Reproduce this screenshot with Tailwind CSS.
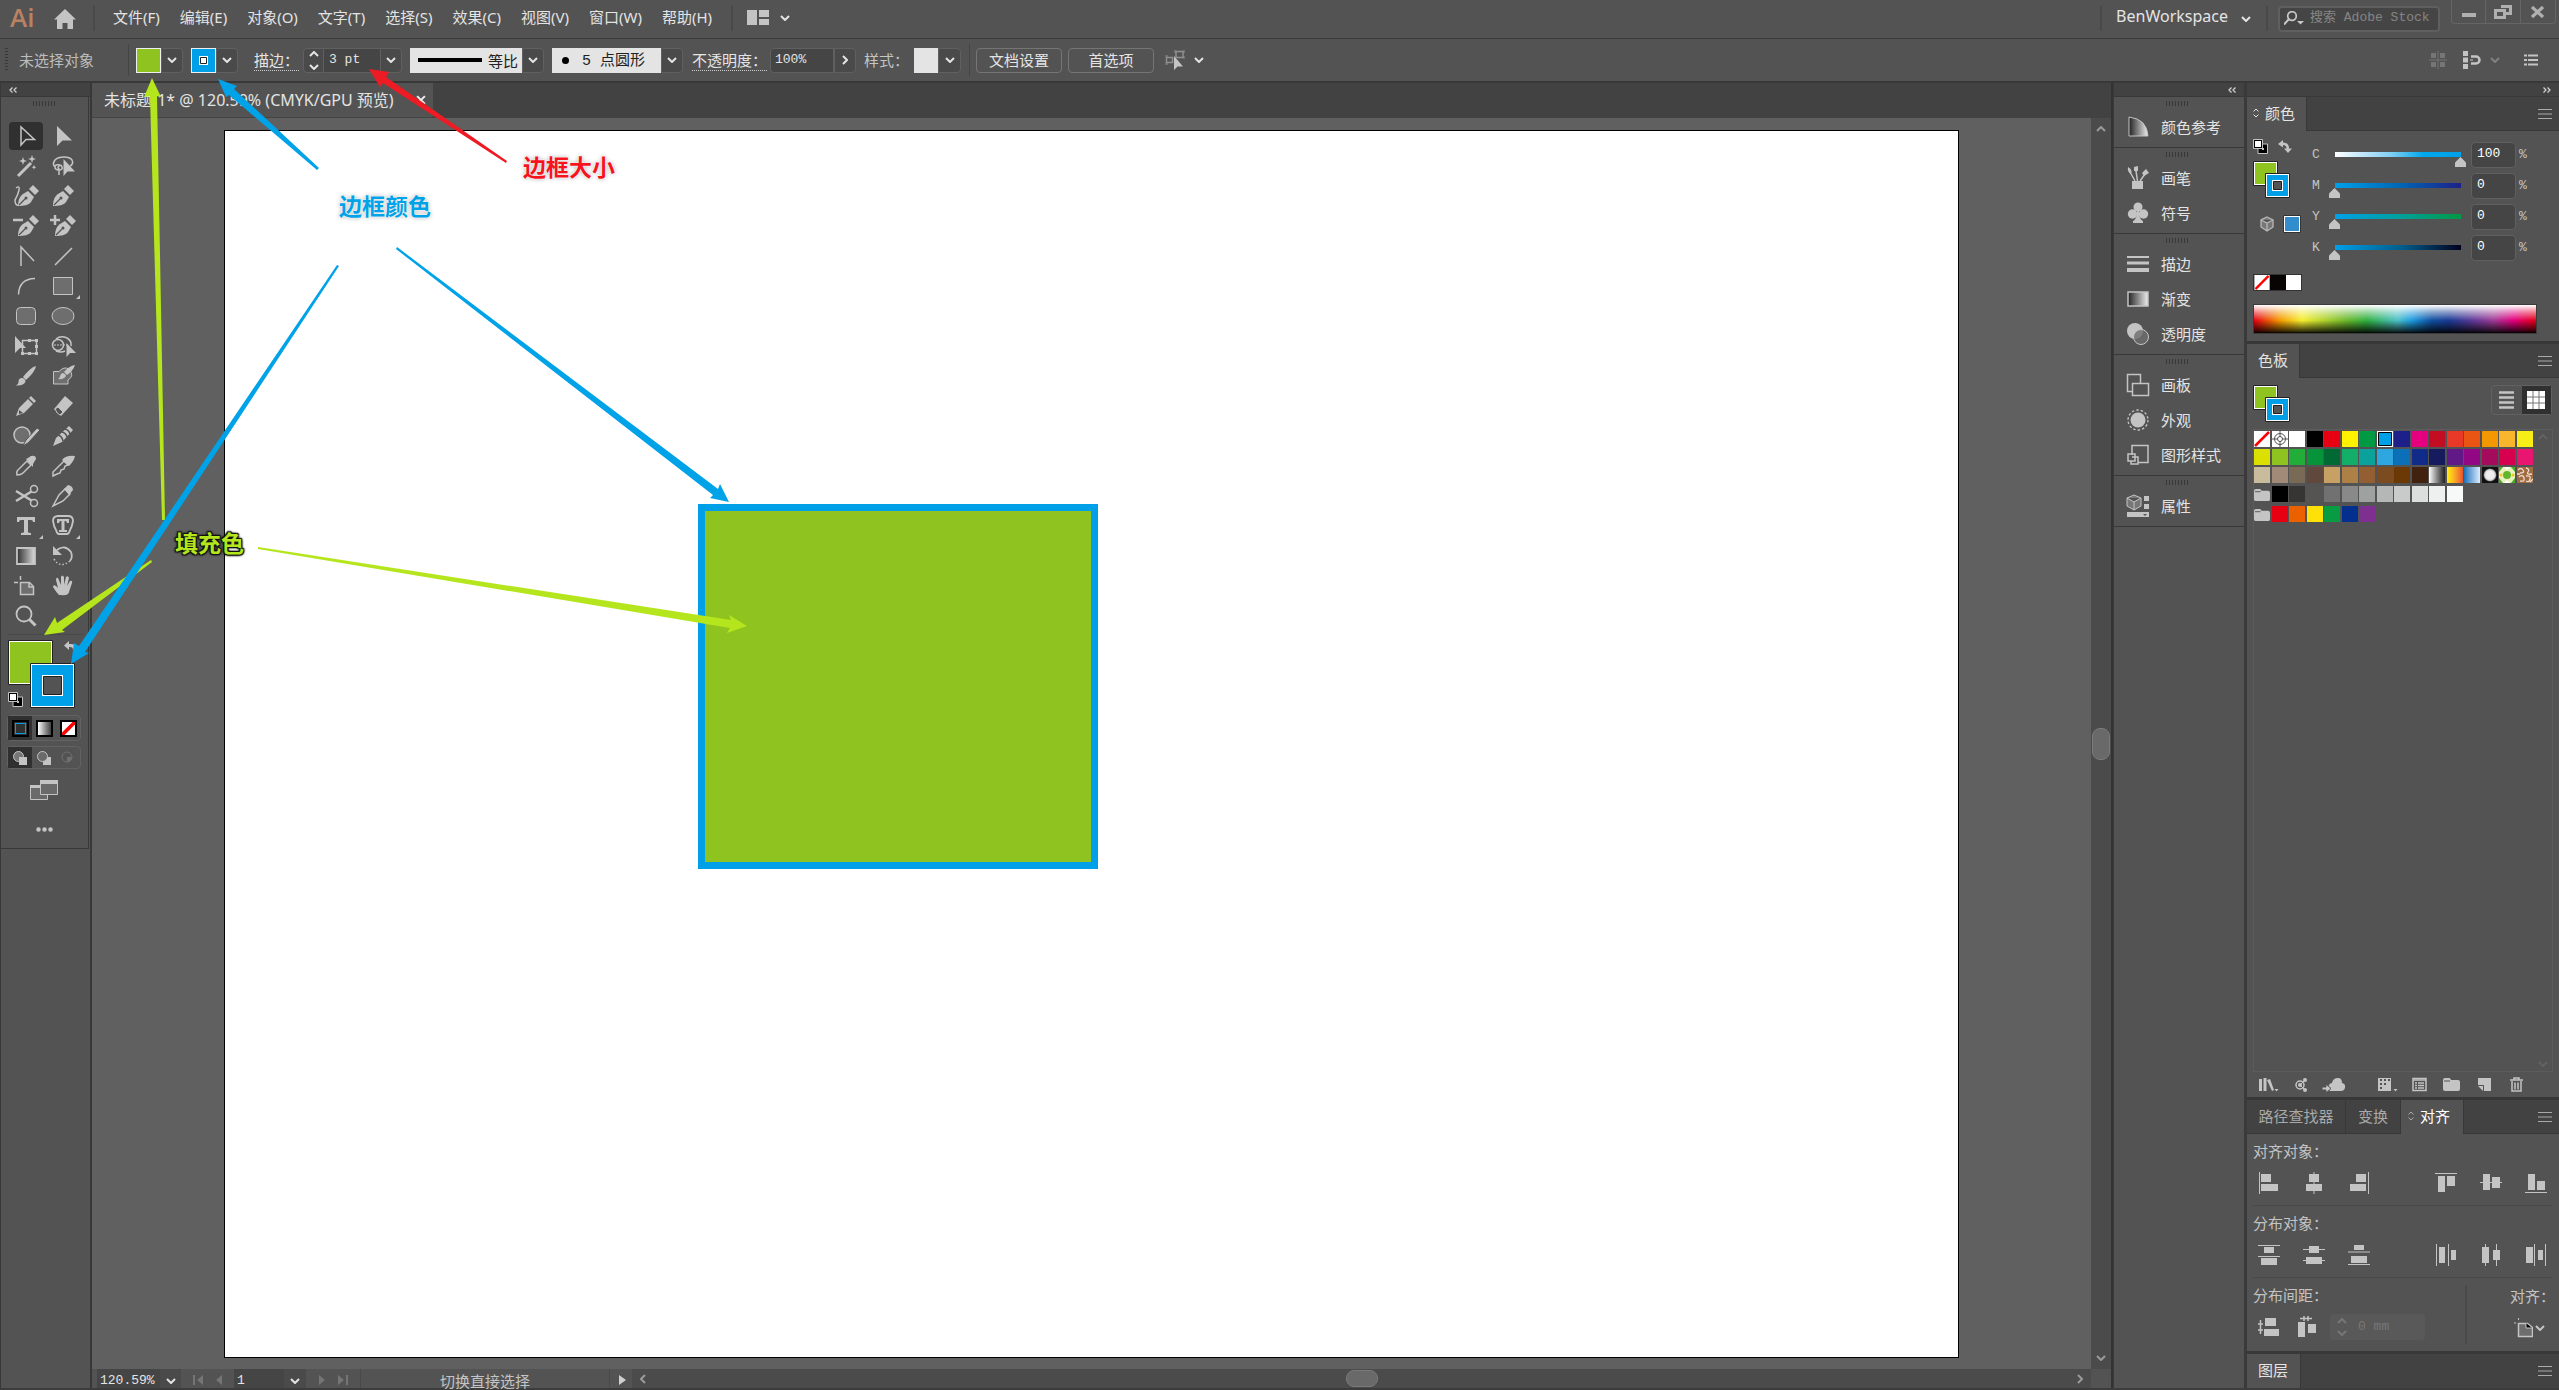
<!DOCTYPE html>
<html lang="zh-CN">
<head>
    <meta charset="UTF-8">
    <meta name="viewport" content="width=device-width, initial-scale=1.0">
    <title>未标题-1 - Ai</title>
    <script src="https://cdn.jsdelivr.net/npm/@tailwindcss/browser@4"></script>
</head>
<body class="relative h-screen overflow-hidden flex flex-col bg-[#535353] text-[#e4e4e4] text-[15px] leading-5 font-['Noto_Sans','Noto_Sans_CJK_SC',sans-serif]">
    <!-- shared glyphs -->
    <svg class="hidden">
        <symbol id="down" viewBox="0 0 10 6"><path d="M1 1l4 4 4-4" fill="none" stroke="currentColor" stroke-width="2"/></symbol>
        <symbol id="right" viewBox="0 0 6 10"><path d="M1 1l4 4-4 4" fill="none" stroke="currentColor" stroke-width="2"/></symbol>
        <symbol id="menu" viewBox="0 0 14 12"><path d="M0 1.500h14M0 6h14M0 10.500h14" stroke="currentColor"/></symbol>
        <symbol id="sort" viewBox="0 0 6 10"><path d="M.5 3.500L3 1l2.500 2.500M.5 6.500L3 9l2.500-2.500" fill="none" stroke="currentColor"/></symbol>
        <symbol id="dleft" viewBox="0 0 8 6"><path d="M3.500.5L1 3l2.500 2.500M7.500.5L5 3l2.500 2.500" fill="none" stroke="currentColor" stroke-width="1.300"/></symbol>
        <symbol id="dright" viewBox="0 0 8 6"><path d="M.5.5L3 3 .5 5.500M4.500.5L7 3 4.500 5.500" fill="none" stroke="currentColor" stroke-width="1.300"/></symbol>
        <symbol id="grip" viewBox="0 0 24 5"><path d="M.5 0v5M3.500 0v5M6.500 0v5M9.500 0v5M12.500 0v5M15.500 0v5M18.500 0v5M21.500 0v5" stroke="#383838"/></symbol>
        <symbol id="default" viewBox="0 0 15 15"><path d="M5 5h9.500v9.500H5z" fill="#000" stroke="#c4c4c4"/><path d="M9 9h2v2H9z" fill="#c4c4c4"/><path d="M.5.5h9v9h-9z" fill="#000" stroke="#c4c4c4"/><path d="M2 2h6v6H2z" fill="#fff"/></symbol>
        <symbol id="paint" viewBox="0 0 37 37">
            <path d="M.5.5h24v24H.5z" fill="#fff" stroke="#222"/><path d="M2 2h21v21H2z" fill="#8fc31f"/>
            <path d="M12.500 12.500h24v24h-24z" fill="#fff" stroke="#222"/><path d="M14 14h21v21H14z" fill="#00a0e9"/>
            <path d="M19 19h11v11H19z" fill="#fff"/><path d="M20.500 20.500h8v8h-8z" fill="#535353" stroke="#222"/>
        </symbol>
        <symbol id="none" viewBox="0 0 16 16"><path d="M0 0h16v16H0z" fill="#fff"/><path d="M1 15L15 1" stroke="#f00" stroke-width="2.500"/></symbol>
        <symbol id="folder" viewBox="0 0 17 13"><path d="M0 2q0-2 2-2h4q1.500 0 2 2h7q2 0 2 2v7q0 2-2 2H2q-2 0-2-2z" fill="#c4c4c4"/><path d="M1 3h6" stroke="#535353"/></symbol>
    </svg>

    <header class="h-[39px] shrink-0 flex items-center border-b border-[#3c3c3c] pb-[1px]">
        <span class="ml-[10px] w-[26px] pb-1 text-[26px] leading-8 font-semibold font-['Open_Sans',sans-serif] text-[#b98262]">Ai</span>
        <button aria-label="主页" class="ml-[17px] text-[#c4c4c4]"><svg class="w-6 h-5" viewBox="0 0 24 20"><path d="M12 0L1 10.500h3V20h5.500v-6h5v6H20v-9.500h3z" fill="currentColor"/></svg></button>
        <i class="ml-4 w-[2px] h-[25px] bg-[#494949]"></i>
        <nav class="ml-[18px] pb-[3px] flex gap-5">
            <a href="#">文件(F)</a>
            <a href="#">编辑(E)</a>
            <a href="#">对象(O)</a>
            <a href="#">文字(T)</a>
            <a href="#">选择(S)</a>
            <a href="#">效果(C)</a>
            <a href="#">视图(V)</a>
            <a href="#">窗口(W)</a>
            <a href="#">帮助(H)</a>
        </nav>
        <i class="ml-[19px] w-[2px] h-[25px] bg-[#494949]"></i>
        <button aria-label="排列文档" class="ml-[14px] pb-[2px] flex items-center gap-[11px]">
            <svg class="w-[22px] h-[15px]" viewBox="0 0 22 15"><path d="M0 0h10v15H0zM12 0h10v7H12zM12 9h10v6H12z" fill="#c4c4c4"/></svg>
            <svg class="w-[10px] h-[6px]"><use href="#down"/></svg>
        </button>
        <i class="ml-auto w-[2px] h-[25px] bg-[#494949]"></i>
        <button class="ml-[14px] flex items-center gap-[13px] pb-[6px] text-base leading-5">BenWorkspace <svg class="w-[10px] h-[6px] mt-[6px]"><use href="#down"/></svg></button>
        <i class="ml-[15px] w-[2px] h-[25px] bg-[#494949]"></i>
        <label class="ml-[10px] w-[162px] h-[26px] flex items-center border-2 border-[#5f5f5f] rounded bg-[#454545] pl-1">
            <svg class="w-5 h-[15px]" viewBox="0 0 20 15"><circle cx="8" cy="5" r="4.300" fill="none" stroke="#c8c8c8" stroke-width="1.700"/><path d="M5 8l-5 5.500" stroke="#c8c8c8" stroke-width="2"/><path d="M13 10h7l-3.500 3.500z" fill="#c8c8c8"/></svg>
            <input aria-label="搜索" placeholder="搜索 Adobe Stock" class="w-[124px] ml-[6px] pb-[2px] text-[13px] font-['Liberation_Mono','Noto_Sans_CJK_SC',monospace] placeholder-[#858585] outline-none">
        </label>
        <div class="ml-[11px] mr-[3px] self-start h-6 w-[105px] grid grid-cols-3 divide-x divide-[#656565] border border-t-0 border-[#656565] rounded-b">
            <button aria-label="最小化" class="flex items-center justify-center"><svg class="w-[14px] h-1 mt-[6px]"><path d="M0 0h14v4H0z" fill="#b0b0b0"/></svg></button>
            <button aria-label="还原" class="flex items-center justify-center"><svg class="w-[18px] h-[14px]" viewBox="0 0 18 14"><path d="M7 1.500h9.500v7H12M1.500 5.500h9v7h-9z" fill="none" stroke="#b0b0b0" stroke-width="3"/></svg></button>
            <button aria-label="关闭" class="flex items-center justify-center"><svg class="w-[13px] h-[12px]" viewBox="0 0 13 12"><path d="M1 1l11 10M12 1L1 11" stroke="#b0b0b0" stroke-width="3.200"/></svg></button>
        </div>
    </header>

    <div class="h-[44px] shrink-0 flex items-center border-b-2 border-[#383838] pl-[5px]">
        <svg class="w-1 h-6"><path d="M1.500 0v24" stroke="#383838" stroke-width="3" stroke-dasharray="1 2"/></svg>
        <span class="ml-[10px] w-[75px] text-[#bdbdbd]">未选择对象</span>
        <i class="ml-[34px] w-[1px] h-8 bg-[#454545]"></i>
        <button aria-label="填色" class="ml-[7px] flex"><span class="w-[25px] h-[25px] bg-[#8fc31f] border border-[#eee]"></span><span class="w-[22px] h-[25px] flex items-center justify-center bg-[#4a4a4a] border border-[#606060] rounded-r"><svg class="w-[10px] h-[6px]"><use href="#down"/></svg></span></button>
        <button aria-label="描边颜色" class="ml-2 flex"><span class="w-[25px] h-[25px] flex items-center justify-center bg-[#00a0e9] border border-[#eee]"><svg class="size-[9px]" viewBox="0 0 9 9"><path d="M0 0h9v9H0z" fill="#fff"/><path d="M1.500 1.500h6v6h-6z" fill="#fff" stroke="#222"/></svg></span><span class="w-[22px] h-[25px] flex items-center justify-center bg-[#4a4a4a] border border-[#606060] rounded-r"><svg class="w-[10px] h-[6px]"><use href="#down"/></svg></span></button>
        <label for="weight" class="ml-4 w-[45px] whitespace-nowrap border-b border-dotted border-[#ccc]">描边：</label>
        <button aria-label="增减" class="ml-1 w-[21px] h-[25px] flex flex-col items-center justify-center gap-[7px] bg-[#4a4a4a] border border-[#606060] rounded-l"><svg class="w-[10px] h-[6px] rotate-180"><use href="#down"/></svg><svg class="w-[10px] h-[6px]"><use href="#down"/></svg></button>
        <input id="weight" value="3 pt" class="w-[56px] h-[25px] pl-[5px] pb-[2px] bg-[#454545] border-y border-[#606060] text-[13px] font-['Liberation_Mono',monospace]">
        <button aria-label="粗细" class="w-[22px] h-[25px] flex items-center justify-center bg-[#4a4a4a] border border-[#606060] rounded-r"><svg class="w-[10px] h-[6px]"><use href="#down"/></svg></button>
        <div class="ml-2 w-[112px] h-[25px] flex items-center bg-[#e4e4e4] pl-2 text-[#222]"><i class="w-16 h-1 bg-black"></i><select aria-label="宽度配置文件" class="appearance-none ml-[6px] mt-[2px] w-[34px] outline-none"><option>等比</option></select></div>
        <span class="w-[22px] h-[25px] flex items-center justify-center bg-[#4a4a4a] border border-[#606060] rounded-r"><svg class="w-[10px] h-[6px]"><use href="#down"/></svg></span>
        <div class="ml-2 w-[109px] h-[25px] flex items-center bg-[#e4e4e4] pl-[10px] text-[#222]"><i class="size-[7px] rounded-full bg-black"></i><select aria-label="画笔定义" class="appearance-none ml-[13px] mt-1 w-[78px] outline-none text-[15px] leading-5 font-['Liberation_Mono','Noto_Sans_CJK_SC',monospace]"><option>5 点圆形</option></select></div>
        <span class="w-[22px] h-[25px] flex items-center justify-center bg-[#4a4a4a] border border-[#606060] rounded-r"><svg class="w-[10px] h-[6px]"><use href="#down"/></svg></span>
        <label for="opacity" class="ml-[9px] w-[75px] whitespace-nowrap border-b border-dotted border-[#ccc]">不透明度：</label>
        <input id="opacity" value="100%" class="ml-[3px] w-16 h-[25px] pl-1 pb-[2px] bg-[#454545] border border-[#606060] rounded-l text-[13px] font-['Liberation_Mono',monospace]">
        <button aria-label="更多" class="w-[22px] h-[25px] flex items-center justify-center bg-[#4a4a4a] border border-[#606060] rounded-r"><svg class="w-[6px] h-[10px]"><use href="#right"/></svg></button>
        <span class="ml-2 w-[45px] text-[#c4c4c4]">样式：</span>
        <button aria-label="图形样式" class="ml-[5px] flex"><span class="w-6 h-[25px] bg-[#e4e4e4]"></span><span class="w-[23px] h-[25px] flex items-center justify-center bg-[#4a4a4a] border border-[#606060] rounded-r"><svg class="w-[10px] h-[6px]"><use href="#down"/></svg></span></button>
        <i class="ml-2 w-[1px] h-8 bg-[#454545]"></i>
        <button class="ml-[6px] w-[86px] h-[25px] flex items-center justify-center border border-[#757575] rounded">文档设置</button>
        <button class="ml-[6px] w-[86px] h-[25px] flex items-center justify-center border border-[#757575] rounded">首选项</button>
        <button aria-label="选择类似的对象" class="ml-[11px] flex items-center gap-[9px]">
            <svg class="w-5 h-5" viewBox="0 0 20 20"><path d="M11 1.500h7v6h-7zM1.500 7.500h6v5h-6z" fill="none" stroke="#909090" stroke-width="1.500"/><path d="M10 0v3M19 0v3M19 6v3M0 6h3M0 14h3" stroke="#909090"/><path d="M9 6v14l3.500-3.500H18z" fill="#c4c4c4"/></svg>
            <svg class="w-[10px] h-[6px]"><use href="#down"/></svg>
        </button>
        <div class="ml-auto mr-[21px] flex items-center text-[#c4c4c4]">
            <svg class="w-[18px] h-[18px] text-[#757575]" viewBox="0 0 18 18"><path d="M2 2h5v5H2zM11 2h5v5h-5zM2 11h5v5H2zM11 11h5v5h-5z" fill="currentColor"/><path d="M9 0v18M0 9h18" stroke="currentColor"/></svg>
            <svg class="ml-4 w-[18px] h-[18px]" viewBox="0 0 18 18"><path d="M0 0h5v5H0zM0 6.500h5v5H0zM0 13h5v5H0z" fill="currentColor"/><path d="M8 5.500h5a3.500 3.500 0 0 1 0 7H8" fill="none" stroke="currentColor" stroke-width="2.500"/><path d="M7 9h3" stroke="currentColor"/></svg>
            <svg class="ml-[9px] w-[10px] h-[6px] text-[#808080]"><use href="#down"/></svg>
            <svg class="ml-6 w-[14px] h-3" viewBox="0 0 14 12"><path d="M0 1.500h3M0 6h3M0 10.500h3M4 1.500h10M4 6h10M4 10.500h10" stroke="currentColor" stroke-width="2"/></svg>
        </div>
    </div>

    <main class="flex-1 min-h-0 flex border-b-2 border-[#3c3c3c]">
        <!-- tools -->
        <aside class="w-[92px] shrink-0 border-l border-r-2 border-[#383838]">
            <div class="h-[14px] bg-[#424242] border-b border-[#383838] px-2 flex items-center text-[#d0d0d0]"><svg class="w-2 h-[6px]"><use href="#dleft"/></svg></div>
            <div class="h-[752px] mr-[1px] border-r border-b border-[#383838] pl-[6px] pt-1">
                <svg class="ml-[26px] w-6 h-[5px]"><use href="#grip"/></svg>
                <div id="tools" class="mt-[15px] grid grid-cols-[37px_37px] auto-rows-[30px] text-[#c4c4c4]"></div>
                <i class="block mt-[3px] w-[76px] h-[1px] bg-[#484848]"></i>
                <svg class="ml-[1px] mt-[5px] w-[76px] h-[70px]" viewBox="0 0 76 70">
                    <path d="M.5.5h44v44H.5z" fill="#fff" stroke="#222"/><path d="M2 2h41v41H2z" fill="#8fc31f"/>
                    <path d="M22.500 23.500h44v44h-44z" fill="#fff" stroke="#222"/><path d="M24 25h41v41H24z" fill="#00a0e9"/>
                    <path d="M34 35h21v21H34z" fill="#fff"/><path d="M35.500 36.500h18v18h-18z" fill="#535353" stroke="#222"/>
                    <path d="M61 1v3h2q5 0 5 5v4h-3V10q0-3-3-3h-1v3l-5-4.500z" fill="#c4c4c4"/>
                    <use href="#default" x="0" y="52" width="15" height="15"/>
                </svg>
                <div class="mt-[5px] w-[74px] h-[26px] grid grid-cols-3 border border-[#626262] rounded">
                    <button aria-label="颜色" class="bg-[#303030] flex items-center justify-center"><span class="size-[17px] border-2 border-black p-[1px]"><i class="block h-full border border-[#00a0e9]"></i></span></button>
                    <button aria-label="渐变" class="flex items-center justify-center"><span class="size-[17px] border-2 border-black bg-linear-to-r from-white to-[#444]"></span></button>
                    <button aria-label="无" class="flex items-center justify-center"><svg class="size-[17px] border-2 border-black" viewBox="0 0 16 16"><path d="M0 0h16v16H0z" fill="#fff"/><path d="M0 16L16 0" stroke="#f00" stroke-width="4.500"/></svg></button>
                </div>
                <div class="mt-[5px] w-[74px] h-[23px] grid grid-cols-3 border border-[#626262] rounded">
                    <button aria-label="正常绘图" class="bg-[#303030] flex items-center justify-center"><svg class="size-[14px]" viewBox="0 0 14 14"><circle cx="5.500" cy="5.500" r="5" fill="#777" stroke="#c4c4c4"/><path d="M6 6h8v8H6z" fill="#c4c4c4"/></svg></button>
                    <button aria-label="背面绘图" class="flex items-center justify-center"><svg class="size-[14px]" viewBox="0 0 14 14"><path d="M6 6h8v8H6z" fill="#c4c4c4"/><circle cx="5.500" cy="5.500" r="5" fill="#6a6a6a" stroke="#c4c4c4"/></svg></button>
                    <button aria-label="内部绘图" class="flex items-center justify-center"><svg class="size-[14px]" viewBox="0 0 14 14"><circle cx="6" cy="6" r="5" fill="none" stroke="#707070"/><path d="M6 6h5q0 5-5 5z" fill="#707070"/></svg></button>
                </div>
                <button aria-label="屏幕模式" class="block ml-[23px] mt-[11px]"><svg class="w-7 h-5" viewBox="0 0 28 20"><path d="M.5 5.500h17v14H.5z" fill="#6a6a6a" stroke="#c4c4c4"/><path d="M0 5h10v3H0z" fill="#c4c4c4"/><path d="M10.500.5h17v14h-17z" fill="#6a6a6a" stroke="#c4c4c4"/><path d="M10 0h18v4H10z" fill="#c4c4c4"/></svg></button>
                <button aria-label="编辑工具栏" class="block ml-[29px] mt-[27px]"><svg class="w-[17px] h-[5px]"><path d="M2.500 2.500h.01M8.500 2.500h.01M14.500 2.500h.01" stroke="#c4c4c4" stroke-width="4.500" stroke-linecap="round"/></svg></button>
            </div>
        </aside>

        <!-- document window -->
        <section class="flex-1 min-w-0 flex flex-col border-r-2 border-[#333]">
            <div class="h-[35px] shrink-0 flex bg-[#424242]">
                <div class="w-[341px] h-[35px] flex items-center bg-[#535353] border-b border-[#444] pl-3 pr-[7px]">
                    <span class="text-base whitespace-nowrap">未标题-1* @ 120.59% (CMYK/GPU 预览)</span>
                    <button aria-label="关闭文档" class="ml-auto"><svg class="w-[10px] h-[10px]" viewBox="0 0 9 9"><path d="M1 1l7 7M8 1L1 8" stroke="#eee" stroke-width="1.800"/></svg></button>
                </div>
            </div>
            <div class="flex-1 min-h-0 flex">
                <div class="flex-1 bg-[#606060] px-[132px] pt-3 pb-[11px]">
                    <div class="relative h-full bg-white border border-black">
                        <div class="absolute left-[473px] top-[373px] w-[400px] h-[365px] bg-[#8fc31f] border-7 border-[#00a0e9]"></div>
                    </div>
                </div>
                <div class="w-5 bg-[#4b4b4b] flex flex-col items-center justify-between py-2 text-[#9a9a9a]">
                    <svg class="w-[10px] h-[6px] rotate-180"><use href="#down"/></svg>
                    <i class="w-[18px] h-8 rounded-lg bg-[#696969] border border-[#7a7a7a]"></i>
                    <svg class="w-[10px] h-[6px]"><use href="#down"/></svg>
                </div>
            </div>
            <div class="h-[19px] shrink-0 flex items-center pl-[5px] bg-[#535353] text-[#757575]">
                <input aria-label="缩放" value="120.59%" class="w-[63px] h-[19px] pl-[3px] pt-1 bg-[#454545] text-[#e4e4e4] text-[13px] font-['Liberation_Mono',monospace]">
                <button aria-label="缩放级别" class="w-[21px] h-[19px] pt-1 flex items-center justify-center bg-[#4a4a4a] text-[#e4e4e4]"><svg class="w-[10px] h-[6px]"><use href="#down"/></svg></button>
                <svg class="ml-3 mt-[3px] w-[29px] h-[10px]" viewBox="0 0 29 10"><path d="M0 0h2v10H0zM10 0v10L4 5zM29 0v10l-6-5z" fill="currentColor"/></svg>
                <input aria-label="画板" value="1" class="ml-[12px] w-[50px] h-[19px] pl-[3px] pt-1 bg-[#454545] text-[#e4e4e4] text-[13px] font-['Liberation_Mono',monospace]">
                <button aria-label="画板列表" class="w-[22px] h-[19px] pt-1 flex items-center justify-center bg-[#4a4a4a] text-[#e4e4e4]"><svg class="w-[10px] h-[6px]"><use href="#down"/></svg></button>
                <svg class="ml-[13px] mt-[3px] w-[29px] h-[10px]" viewBox="0 0 29 10"><path d="M0 0v10l6-5zM19 0v10l6-5zM27 0h2v10h-2z" fill="currentColor"/></svg>
                <span class="ml-3 w-[250px] h-[19px] pt-[2px] border-x border-[#494949] text-center text-[#c4c4c4]">切换直接选择</span>
                <svg class="ml-[9px] mt-[3px] w-[7px] h-[10px]"><path d="M0 0v10l7-5z" fill="#d0d0d0"/></svg>
                <div class="ml-[6px] flex-1 h-[19px] bg-[#4b4b4b] flex items-center justify-between px-2 text-[#9a9a9a]">
                    <svg class="w-[6px] h-[10px] rotate-180"><use href="#right"/></svg>
                    <i class="w-8 h-[17px] rounded-lg bg-[#696969] border border-[#7a7a7a]"></i>
                    <svg class="w-[6px] h-[10px]"><use href="#right"/></svg>
                </div>
                <i class="w-5 h-[19px] bg-[#535353]"></i>
            </div>
        </section>

        <!-- collapsed panels -->
        <aside class="w-[134px] shrink-0 border-l border-r-3 border-[#3a3a3a]">
            <div class="h-[14px] bg-[#424242] border-b border-[#383838] px-2 flex items-center justify-end text-[#d0d0d0]"><svg class="w-2 h-[6px]"><use href="#dleft"/></svg></div>
            <div id="dock"></div>
        </aside>

        <!-- open panels -->
        <aside class="w-[312px] shrink-0 flex flex-col">
            <div class="h-[14px] shrink-0 bg-[#424242] border-b border-[#383838] px-2 flex items-center justify-end text-[#d0d0d0]"><svg class="w-2 h-[6px]"><use href="#dright"/></svg></div>
            <div class="h-[34px] shrink-0 flex bg-[#424242]">
                <h2 class="w-[59px] flex items-center gap-[6px] bg-[#535353] pl-[6px] pb-[2px]"><svg class="w-[6px] h-[10px]"><use href="#sort"/></svg>颜色</h2>
                <button aria-label="颜色面板菜单" class="flex-1 flex items-center justify-end pr-[7px] border-b border-l border-[#383838] text-[#aaa]"><svg class="w-[14px] h-3"><use href="#menu"/></svg></button>
            </div>
            <div class="h-[213px] shrink-0 border-b-3 border-[#383838] px-[6px]">
                <div class="flex h-[143px]">
                    <div class="w-[59px] pt-2">
                        <div class="flex gap-[10px]"><svg class="size-[15px]"><use href="#default"/></svg><svg class="size-[15px]" viewBox="0 0 15 15"><path d="M5 1v2.500q6 0 6 6h3L10 14 6 9.500h2.500Q8.500 6 5 6v2.500L0 5z" fill="#c4c4c4"/></svg></div>
                        <svg class="mt-[7px] size-[37px]"><use href="#paint"/></svg>
                        <div class="mt-[17px] pl-[6px] flex gap-2">
                            <svg class="w-4 h-[18px]" viewBox="0 0 16 18"><path d="M8 2l6 3v7l-6 4-6-4V5zM2 5l6 3 6-3M8 8v8" fill="#777" stroke="#b8b8b8" stroke-width="1.300"/></svg>
                            <svg class="size-[18px]" viewBox="0 0 18 18"><path d="M.5.5h17v17H.5z" fill="#fff" stroke="#333"/><path d="M2 2h14v14H2z" fill="#338ccc"/></svg>
                        </div>
                    </div>
                    <div id="sliders" class="pt-[11px] flex flex-col gap-[5px] font-['Liberation_Mono',monospace] text-[13px]"></div>
                </div>
                <div class="w-[49px] h-[17px] flex border border-[#333]"><svg class="w-4 h-[15px]"><use href="#none"/></svg><i class="w-4 bg-[#080404]"></i><i class="flex-1 bg-white"></i></div>
                <div class="mt-[13px] w-[284px] h-[30px] border border-[#3c3c3c] bg-[linear-gradient(to_bottom,#fff,#ffffff80_25%,#ffffff00_55%,#00000000_55%,#000c_95%,#000),linear-gradient(to_right,#e60012,#f39800_9%,#f5ee30_17%,#6ab82d_33%,#30b040_40%,#4dc0c8_51%,#1d9be0_56%,#1050a0_63%,#1a3a94_69%,#5a3a98_77%,#a03c96_85%,#e4007f_92%,#e60012)]"></div>
            </div>

            <div class="h-[34px] shrink-0 flex bg-[#424242]">
                <h2 class="w-[52px] flex items-center bg-[#535353] pl-[11px] pb-[2px]">色板</h2>
                <button aria-label="色板面板菜单" class="flex-1 flex items-center justify-end pr-[7px] border-b border-l border-[#383838] text-[#aaa]"><svg class="w-[14px] h-3"><use href="#menu"/></svg></button>
            </div>
            <div class="flex-1 min-h-0 flex flex-col border-b-3 border-[#383838] px-[6px] pt-[7px]">
                <div class="flex justify-between pr-[1px]">
                    <svg class="size-[37px]"><use href="#paint"/></svg>
                    <div class="w-[61px] h-[30px] grid grid-cols-2 border border-[#626262] rounded">
                        <button aria-label="列表视图" class="flex items-center justify-center"><svg class="w-[15px] h-[18px]" viewBox="0 0 15 18"><path d="M0 1.500h15M0 6.500h15M0 11.500h15M0 16.500h15" stroke="#c4c4c4" stroke-width="2.500"/></svg></button>
                        <button aria-label="缩览图视图" class="flex items-center justify-center bg-[#303030]"><svg class="w-[18px] h-[18px]" viewBox="0 0 18 18"><path d="M0 0h18v18H0z" fill="#fff"/><path d="M6 0v18M12 0v18M0 6h18M0 12h18" stroke="#777"/></svg></button>
                    </div>
                </div>
                <div class="mt-[7px] flex-1 border border-[#5c5c5c] flex justify-between">
                    <div id="swatches" class="w-[280px]"></div>
                    <div class="w-[18px] py-1 flex flex-col items-center justify-between text-[#626262]"><svg class="w-[10px] h-[6px] rotate-180"><use href="#down"/></svg><svg class="w-[10px] h-[6px]"><use href="#down"/></svg></div>
                </div>
                <div class="h-[25px] shrink-0 flex items-center pl-[6px] text-[#c4c4c4]">
                    <svg class="w-5 h-4" viewBox="0 0 20 16"><path d="M0 2h3v12H0zM4.500 1h3v13h-3zM8 3l3-1 4 11-2 1z" fill="currentColor"/><path d="M15.500 12h4l-2 2.500z" fill="currentColor"/></svg>
                    <svg class="ml-4 w-3 h-4" viewBox="0 0 12 16"><circle cx="5" cy="8" r="4" fill="none" stroke="currentColor" stroke-width="1.500"/><path d="M5 8l5-5M5 8l5 5" stroke="currentColor"/><circle cx="10" cy="3" r="2" fill="currentColor"/><circle cx="10" cy="13" r="2" fill="currentColor"/><circle cx="5" cy="8" r="2" fill="currentColor"/></svg>
                    <svg class="ml-[15px] w-[23px] h-4" viewBox="0 0 23 16"><path d="M8 14Q5 12 7 8q1-2 3-2 1-5 6-5 4 0 4 5 4 1 3 5-1 3-4 3z" fill="currentColor"/><path d="M0 10h4V7l5 4.500L4 16v-3H0z" fill="currentColor" stroke="#535353"/></svg>
                    <svg class="ml-[33px] w-5 h-4" viewBox="0 0 20 16"><path d="M0 1h13v13H0z" fill="currentColor"/><path d="M2 2h2v2H2zM6 2h2v2H6zM10 2h2v2h-2zM2 6h2v2H2zM6 6h2v2H6zM2 10h2v2H2z" fill="#535353"/><path d="M15.500 12h4l-2 2.500z" fill="currentColor"/></svg>
                    <svg class="ml-[14px] w-[15px] h-4" viewBox="0 0 15 16"><path d="M1 1.500h13v12H1z" fill="none" stroke="currentColor" stroke-width="1.500"/><path d="M1 3h13M3 6h2M6 6h6M3 8.500h2M6 8.500h6M3 11h2M6 11h6" stroke="currentColor" stroke-width="1.500"/></svg>
                    <svg class="ml-4 w-[17px] h-[13px]"><use href="#folder"/></svg>
                    <svg class="ml-[18px] w-[14px] h-4" viewBox="0 0 14 16"><path d="M0 1h13v13H6V8H0z" fill="currentColor"/><path d="M0 9l5 5V9z" fill="currentColor"/></svg>
                    <svg class="ml-[18px] w-[13px] h-4" viewBox="0 0 13 16"><path d="M0 3h13M4 2.500V1h5v1.500M2 4v10h9V4M5 5.500v7M8 5.500v7" fill="none" stroke="currentColor" stroke-width="1.500"/></svg>
                </div>
            </div>

            <div class="h-[34px] shrink-0 flex bg-[#424242] text-[#a8a8a8]">
                <button class="w-[99px] pb-[2px] border-b border-r border-[#383838]">路径查找器</button>
                <button class="w-[55px] pb-[2px] border-b border-r border-[#383838]">变换</button>
                <h2 class="w-[62px] flex items-center gap-[6px] bg-[#535353] pl-[7px] pb-[2px] text-white"><svg class="w-[6px] h-[10px] text-[#aaa]"><use href="#sort"/></svg>对齐</h2>
                <button aria-label="对齐面板菜单" class="flex-1 flex items-center justify-end pr-[7px] border-b border-l border-[#383838]"><svg class="w-[14px] h-3"><use href="#menu"/></svg></button>
            </div>
            <div class="h-[220px] shrink-0 border-b-3 border-[#383838] px-[6px] text-[#c4c4c4]">
                <p class="mt-[7px]">对齐对象：</p>
                <div id="align" class="mt-[11px] mb-[11px] pl-[5px] pr-[6px] grid grid-cols-[22px_22px_22px_1fr_22px_22px_22px] gap-x-[23px]"></div>
                <hr class="border-[#494949]">
                <p class="mt-[7px]">分布对象：</p>
                <div id="distribute" class="mt-[11px] mb-[11px] pl-[5px] pr-[6px] grid grid-cols-[22px_22px_22px_1fr_22px_22px_22px] gap-x-[23px]"></div>
                <hr class="border-[#494949]">
                <div class="flex justify-between">
                    <div>
                        <label for="gap" class="block mt-[7px]">分布间距：</label>
                        <div class="mt-[9px] pl-[5px] flex items-center">
                            <button aria-label="垂直分布间距"><svg class="w-[22px] h-[22px]" viewBox="0 0 22 22"><path d="M7 2h11v8H7zM6 13h15v7H6z" fill="currentColor"/><path d="M2.500 4v14M0 8h5M0 14h5" stroke="currentColor" stroke-width="1.500"/></svg></button>
                            <button aria-label="水平分布间距" class="ml-[18px]"><svg class="w-[22px] h-[22px]" viewBox="0 0 22 22"><path d="M0 6h7v15H0zM10 8h8v9h-8z" fill="currentColor"/><path d="M2 2.500h12M6 0v5M10 0v5" stroke="currentColor" stroke-width="1.500"/></svg></button>
                            <div class="ml-[10px] w-[95px] h-[26px] flex items-center rounded bg-[#595959] text-[#777]"><span class="w-6 flex flex-col items-center gap-[6px]"><svg class="w-[10px] h-[6px] rotate-180"><use href="#down"/></svg><svg class="w-[10px] h-[6px]"><use href="#down"/></svg></span><input id="gap" disabled value="0 mm" class="w-[68px] pl-1 text-[13px] font-['Liberation_Mono',monospace]"></div>
                        </div>
                    </div>
                    <div class="mt-2 w-[88px] h-[58px] border-l-2 border-[#494949] pl-[43px]">
                        <p class="whitespace-nowrap">对齐：</p>
                        <button aria-label="对齐到" class="mt-[12px] ml-1 flex items-center gap-[2px]"><svg class="w-[19px] h-5" viewBox="0 0 19 20"><path d="M4.500 5.500h9l5 4v9h-14z" fill="#6e6e6e" stroke="currentColor" stroke-width="1.500"/><path d="M4.500 0v2M0 5h2M12 5v5h6" stroke="currentColor"/></svg><svg class="w-[10px] h-[6px]"><use href="#down"/></svg></button>
                    </div>
                </div>
            </div>
            <div class="h-[34px] shrink-0 flex bg-[#424242]">
                <h2 class="w-[53px] flex items-center bg-[#535353] pl-[11px] pb-[2px]">图层</h2>
                <button aria-label="图层面板菜单" class="flex-1 flex items-center justify-end pr-[7px] border-l border-[#383838] text-[#aaa]"><svg class="w-[14px] h-3"><use href="#menu"/></svg></button>
            </div>
        </aside>
    </main>

    <!-- annotations over the window -->
    <svg class="absolute left-0 top-0 w-[800px] h-[700px] pointer-events-none" viewBox="0 0 800 700">
        <g fill="#b5e61d">
            <path d="M152 78l9 19-4-1 8 424h-3L150 96l-6 1z"/>
            <path d="M44 635l11-18 2 6 94-63 1 2-90 68 3 2z"/>
            <path d="M747 626l-20 7 3-5L258 549v-2l473 73-2-5z"/>
        </g>
        <g fill="#00a2e8">
            <path d="M71 664l3-21 5 3L337 265l2 1L85 652l4 1z"/>
            <path d="M218 79l19 7-3 3 85 79-2 2-88-75-3 2z"/>
            <path d="M729 502l-19-4 3-3L396 249l1-2 321 242 2-5z"/>
        </g>
        <path d="M369 69l20 3-3 5 121 84-1 2-123-80-3 4z" fill="#ed1c24"/>
    </svg>
    <p class="absolute left-[523px] top-[152px] text-[23px] leading-[30px] font-bold text-[#f5141e] [text-shadow:0_0_2px_#fff,0_0_2px_#fff,0_0_4px_#999]">边框大小</p>
    <p class="absolute left-[339px] top-[191px] text-[23px] leading-[30px] font-bold text-[#00a2e8] [text-shadow:0_0_2px_#fff,0_0_2px_#fff,0_0_4px_#999]">边框颜色</p>
    <p class="absolute left-[175px] top-[528px] text-[23px] leading-[30px] font-bold text-[#b5e61d] [text-shadow:1px_1px_1px_#111,-1px_-1px_1px_#111,1px_-1px_1px_#111,-1px_1px_1px_#111,0_0_3px_#111,0_0_3px_#111]">填充色</p>

    <script>
        var line = 'fill="none" stroke="currentColor" stroke-width="1.500"';
        var nib = '<path d="M4 22C4 16 6 12 9 10l5-3 6 6-3 5c-2 3-7 4-13 4z" fill="currentColor"/><path d="M15 5l4-4 6 6-4 4z" fill="currentColor"/><path d="M5 21l6-6" stroke="#535353" stroke-width="1.300"/><circle cx="12" cy="14" r="1.500" fill="#535353"/>';
        var corner = '<path d="M29 21v4h-4z" fill="currentColor"/>';
        var tools = [
            ['选择', '<path d="M7 3v18l5-5.500h8.500z" ' + line + '/>'],
            ['直接选择', '<path d="M6 2v20l5.500-5.500H21z" fill="currentColor"/>'],
            ['魔棒', '<path d="M4 22L17 9" stroke="currentColor" stroke-width="3"/><path d="M9 3l1 3 3 1-3 1-1 3-1-3-3-1 3-1zM18 1l1 3 3 1-3 1-1 3-1-3-3-1 3-1zM20 11l.7 1.500 1.500.7-1.500.7-.7 1.500-.7-1.500-1.500-.7 1.500-.7z" fill="currentColor"/>'],
            ['套索', '<path d="M4 13Q1 10 4 6c4-4 14-4 17 0q2 4-2 6M9 11q-5-1-5 2t4 3 3-3-3-1 0 3l0 6" ' + line + '/><path d="M12.500 5v17l4-4.500H24z" fill="currentColor"/>'],
            ['曲率', '<path d="M2 4q4-3 3 2T1 16q0 6 4 5" ' + line + '/>' + nib],
            ['钢笔', '<g transform="translate(-2)">' + nib + '</g>'],
            ['删除锚点', '<path d="M-1 6h10" stroke="currentColor" stroke-width="2.500"/>' + nib],
            ['添加锚点', '<path d="M-1 6h10M4 1v10" stroke="currentColor" stroke-width="2.500"/>' + nib],
            ['锚点', '<path d="M7 22V3l13 14" ' + line + '/>'],
            ['直线段', '<path d="M4 21L21 4" ' + line + '/>'],
            ['弧形', '<path d="M4.500 20.500Q5 5 21 4.500" ' + line + '/>'],
            ['矩形', '<path d="M2.500 3.500h19v17h-19z" fill="#6e6e6e" stroke="currentColor"/>' + corner],
            ['圆角矩形', '<rect x="2.500" y="3.500" width="19" height="17" rx="4" fill="#6e6e6e" stroke="currentColor"/>'],
            ['椭圆', '<ellipse cx="12" cy="12" rx="11" ry="8.500" fill="#6e6e6e" stroke="currentColor"/>'],
            ['自由变换', '<path d="M8.500 6.500h14v13h-14z" ' + line + '/><path d="M14 5h3v3h-3zM21 5h3v3h-3zM21 11h3v3h-3zM21 18h3v3h-3zM14 18h3v3h-3zM7 18h3v3H7z" fill="currentColor"/><path d="M1 2v17l5-5h6z" fill="currentColor"/>'],
            ['形状生成器', '<circle cx="7" cy="11" r="5.500" ' + line + '/><path d="M5 5q5-4 11-1 5 3 4 8M5 17q5 2 9 0" ' + line + '/><path d="M3 11h14" stroke="currentColor" stroke-dasharray="2 1"/><path d="M15.500 9v14l3.500-4h6z" fill="currentColor"/>'],
            ['画笔', '<path d="M22 2Q17 3 9 13l3 3Q21 8 22 2z" fill="currentColor"/><path d="M8 14q3 0 3.500 3.500Q10 22 2 21.500q3-2 2.500-4.500Q5 14 8 14z" fill="currentColor"/>'],
            ['斑点画笔', '<path d="M2.500 7.500H8Q13 2 18 5q6 7-1 11v4H2.500z" fill="#6e6e6e" stroke="currentColor"/><path d="M24 1q-6 1-11 7l3 3q6-4 8-10zM12 9q3 1 3 3-3 4-8 3 2-1 2-3 1-3 3-3z" fill="currentColor"/>'],
            ['铅笔', '<path d="M2 22l3-8L14 5l5 5-9 9zM15 4l2-2 5 5-2 2z" fill="currentColor"/><path d="M5 16l4 3-4 1z" fill="#535353"/>'],
            ['橡皮擦', '<path d="M3 15L14 2l8 7-12 13z" fill="currentColor"/><path d="M4 15l3-2 5 5-3 3q-3-1-5-6z" fill="#535353" stroke="currentColor"/>'],
            ['Shaper', '<circle cx="8" cy="11" r="8" fill="#6e6e6e" stroke="currentColor" stroke-width="1.500"/><path d="M9 22l3-6L23 4l3 2-12 13z" fill="currentColor" stroke="#535353"/>'],
            ['符号喷枪', '<path d="M2 22l3-8L18 2l4 4-11 12z" fill="currentColor"/><path d="M7 11q4 1 5 6M11 8q4 1 5 5M14 5q4 1 5 5" stroke="#535353" stroke-width="1.500" fill="none"/>'],
            ['吸管', '<path d="M3 21q-1-4 2-6l8-8 4 4-8 8q-2 2-6 2z" ' + line + '/><path d="M12 5l2-1 3-2q5-1 5 3l-3 5v3z" fill="currentColor"/>'],
            ['度量', '<path d="M2 22v-4L13 7l4 4-3 1-1 3-3 1-1 3-3 1z" ' + line + '/><path d="M11 6q4-5 13-4-1 5-6 10z" fill="currentColor"/>'],
            ['剪刀', '<circle cx="20" cy="5" r="3.500" ' + line + '/><circle cx="20" cy="19" r="3.500" ' + line + '/><path d="M17.500 7.500L2 17M17.500 16.500L2 7" stroke="currentColor" stroke-width="2.500"/>'],
            ['美工刀', '<path d="M2 22L8 11l6-6 5 5-7 7z" ' + line + '/><path d="M13 5l4-4q5 1 5 5l-4 5z" fill="currentColor"/>'],
            ['文字', '<path d="M3 3h18v5h-2q0-2-2-2h-3v12q0 1 3 1v2H7v-2q3 0 3-1V6H7Q5 6 5 8H3z" fill="currentColor"/>' + corner],
            ['修饰文字', '<path d="M2 7q0-5 5-5h10q5 0 5 5-1 6-3 9-1 4-3 4H8q-2 0-3-4Q3 13 2 7z" fill="none" stroke="currentColor" stroke-width="1.800"/><path d="M6 5h12v4h-2l-1-2h-1.500v9H16v2H8v-2h2.500V7H9L8 9H6z" fill="currentColor"/>' + corner],
            ['渐变', '<linearGradient id="tg"><stop stop-color="#303030"/><stop offset="1" stop-color="#ddd"/></linearGradient><path d="M3 4h18v16H3z" fill="url(#tg)" stroke="currentColor" stroke-width="1.800"/>'],
            ['旋转', '<path d="M6 6q8-6 14 2 2 5-1 9" fill="none" stroke="currentColor" stroke-width="1.800"/><path d="M2 2v9h9z" fill="currentColor"/><path d="M3 15q6 10 16 2" fill="none" stroke="currentColor" stroke-width="1.500" stroke-dasharray="1.500 2"/>'],
            ['画板', '<path d="M6.500 8.500h9l4 4v8h-13z" fill="#6e6e6e" stroke="currentColor" stroke-width="1.500"/><path d="M0 8.500h4M6.500 2v4M15 8v5h5" stroke="currentColor" stroke-width="1.500" fill="none"/>'],
            ['抓手', '<path d="M8 21Q5 18 2 13q0-3 3-1l2 2L5 6q0-3 2-2l3 7V3q1-3 3 0v8l2-8q2-2 3 1l-2 8 3-5q3-1 2 2l-3 9q-1 4-8 3z" fill="currentColor"/>'],
            ['缩放', '<circle cx="10" cy="10" r="7.500" fill="none" stroke="currentColor" stroke-width="1.800"/><path d="M15.500 15.500l6 6" stroke="currentColor" stroke-width="3"/>']
        ];
        document.getElementById('tools').innerHTML = tools.map(function (t, i) {
            var cell = i === 0 ? 'flex items-center justify-center rounded bg-[#303030] my-[1px] ml-[2px] mr-[1px]' : 'flex items-center justify-center';
            return '<button aria-label="' + t[0] + '" class="' + cell + '"><svg class="size-6 overflow-visible" viewBox="0 0 24 24">' + t[1] + '</svg></button>';
        }).join('');

        var dock = [
            [['颜色参考', '<linearGradient id="dg"><stop stop-color="#222"/><stop offset="1" stop-color="#eee"/></linearGradient><path d="M2 1q18 2 19 19H2z" fill="url(#dg)" stroke="#c4c4c4"/>']],
            [['画笔', '<path d="M5 14h11v8H5z" fill="currentColor"/><path d="M8 14L3 5M10.500 14L9 4M13 14l5-7" stroke="currentColor" stroke-width="1.500"/><path d="M1 0q5 3 3 7-4-2-3-7zM7 0l4-1v5H7zM15 6l4-4 3 4-5 3z" fill="currentColor"/>'],
             ['符号', '<circle cx="11" cy="5" r="4.500" fill="currentColor"/><circle cx="5.500" cy="12" r="4.700" fill="currentColor"/><circle cx="16.500" cy="12" r="4.700" fill="currentColor"/><path d="M10 9h2q0 8 4 10v2H6v-2q4-2 4-10z" fill="currentColor"/>']],
            [['描边', '<path d="M0 4h22" stroke="currentColor" stroke-width="2"/><path d="M0 10h22" stroke="currentColor" stroke-width="3"/><path d="M0 17h22" stroke="currentColor" stroke-width="4"/>'],
             ['渐变', '<path d="M1 4h20v14H1z" fill="url(#dg)" stroke="currentColor" stroke-width="1.500"/>'],
             ['透明度', '<circle cx="8" cy="8" r="8" fill="currentColor"/><circle cx="14" cy="14" r="7.500" fill="#6e6e6ecc" stroke="currentColor"/>']],
            [['画板', '<path d="M.5.5h13v17H.5z" ' + line + '/><path d="M5.500 9.500h16v12h-16z" fill="#535353" stroke="currentColor" stroke-width="1.500"/>'],
             ['外观', '<circle cx="11" cy="11" r="7.500" fill="currentColor"/><circle cx="11" cy="11" r="10" fill="none" stroke="currentColor" stroke-width="1.300" stroke-dasharray="2.500 2"/>'],
             ['图形样式', '<path d="M5 11V1.500h16v17H11" ' + line + '/><path d="M1 10h7v7H1zM5 13h6v7H4v-3" ' + line + '/>']],
            [['属性', '<path d="M7 0l7 3v8l-7 4-7-4V3zM0 3l7 4 7-4M7 7v8" fill="#777" stroke="currentColor"/><path d="M17 1h5v5h-5zM17 9h5v5h-5zM0 17h22v5H0z" fill="currentColor"/><path d="M16 19h4l-2 2z" fill="#535353"/>']]
        ];
        document.getElementById('dock').innerHTML = dock.map(function (group) {
            return '<div class="relative pt-3 pb-[3px] border-b border-[#383838]"><svg class="absolute left-[52px] top-1 w-6 h-[5px]"><use href="#grip"/></svg>' + group.map(function (p) {
                return '<button class="w-full h-[35px] flex items-center gap-3 pl-[13px]"><svg class="size-[22px] overflow-visible text-[#c4c4c4]" viewBox="0 0 22 22">' + p[1] + '</svg>' + p[0] + '</button>';
            }).join('') + '</div>';
        }).join('');

        var sliders = [
            ['C', 100, '#fff, #7fcef4 45%, #00a8ec 70%, #00a0e9'],
            ['M', 0, '#00a0e9, #0068b7 50%, #1d2088'],
            ['Y', 0, '#00a0e9, #00a0a0 50%, #009944'],
            ['K', 0, '#00a0e9, #005a88 55%, #00001e']
        ];
        document.getElementById('sliders').innerHTML = sliders.map(function (s) {
            return '<div class="h-[26px] flex text-[#c4c4c4]"><label for="v' + s[0] + '" class="w-[23px] pt-[3px]">' + s[0] + '</label>' +
                '<div class="w-[126px] pt-[10px]"><div class="h-[5px]" style="background:linear-gradient(to right, ' + s[2] + ')"></div>' +
                '<input type="range" aria-label="' + s[0] + '" value="' + s[1] + '" class="block appearance-none w-[137px] h-[10px] -mx-[6px] bg-transparent [&::-webkit-slider-thumb]:appearance-none [&::-webkit-slider-thumb]:w-[11px] [&::-webkit-slider-thumb]:h-[10px] [&::-webkit-slider-thumb]:bg-[#c4c4c4] [&::-webkit-slider-thumb]:[clip-path:polygon(50%_0,100%_55%,100%_100%,0_100%,0_55%)]"></div>' +
                '<input id="v' + s[0] + '" value="' + s[1] + '" class="ml-[10px] w-[45px] h-[26px] pl-[5px] pb-1 border border-[#606060] rounded bg-[#454545] text-white">' +
                '<span class="ml-[3px] pt-[3px]">%</span></div>';
        }).join('');

        var rows = [
            ['none', 'reg', '#fff', '#000', '#e60012', '#fff100', '#009944', 'sel', '#1d2088', '#e4007f', '#c30d23', '#e83828', '#ea5514', '#f39800', '#f8b62d', '#f8ee17'],
            ['#dbe000', '#8fc31f', '#22ac38', '#079339', '#006934', '#13ae67', '#0aa29a', '#2ea7e0', '#0c70b8', '#102b88', '#161b5e', '#601986', '#920783', '#a40b5d', '#d7004f', '#e81670'],
            ['#c9bc9c', '#a28a78', '#796a56', '#60483c', '#c7a063', '#ad8045', '#935e32', '#7d4b20', '#6a3906', '#40220f', 'g1', 'g2', 'g3', 'g4', 'p1', 'p2'],
            ['folder', '#000', '#373533', '#555452', '#727171', '#898989', '#9fa0a0', '#b5b6b6', '#c9caca', '#dcdddd', '#eeefef', '#f7f8f8'],
            ['folder', '#e60012', '#eb6100', '#ffe10a', '#079b42', '#032f8f', '#7d308f']
        ];
        var special = {
            none: '<svg class="size-4"><use href="#none"/></svg>',
            reg: '<svg class="size-4 bg-white" viewBox="0 0 16 16"><circle cx="8" cy="8" r="5.500" fill="none" stroke="#555"/><circle cx="8" cy="8" r="2.500" fill="none" stroke="#555"/><path d="M8 0v6M8 10v6M0 8h6M10 8h6" stroke="#555"/></svg>',
            sel: '<svg class="size-4" viewBox="0 0 16 16"><path d="M0 0h16v16H0z" fill="#fff"/><path d="M1.500 1.500h13v13h-13z" fill="#00a0e9" stroke="#000"/></svg>',
            g1: '<i class="block size-4 bg-linear-to-r from-white to-[#222]"></i>',
            g2: '<i class="block size-4 bg-linear-to-r from-[#fff100] to-[#e8502c]"></i>',
            g3: '<i class="block size-4 bg-linear-to-r from-[#0c70b8] to-[#ddeeff]"></i>',
            g4: '<i class="block size-4 bg-[radial-gradient(circle,#eee_35%,#ccc_48%,#111_60%)]"></i>',
            p1: '<svg class="size-4 bg-[#e9f2bd]" viewBox="0 0 16 16"><circle cx="8" cy="8" r="4" fill="#63b52c"/><path d="M0 0h4L0 5zM16 0v5l-4-5zM0 16v-5l4 5zM16 16h-4l4-5z" fill="#4ca92c"/><path d="M5 0h6L8 3zM5 16h6l-3-3z" fill="#fff"/><circle cx="2" cy="8" r="1.500" fill="#f3c61d"/><circle cx="14" cy="8" r="1.500" fill="#f3c61d"/></svg>',
            p2: '<svg class="size-4 bg-[#a06a42]" viewBox="0 0 16 16"><path d="M1 3q3-3 5 0t-3 3M9 1q4 1 2 4t4 2M2 10q4-3 5 1t-4 3M9 9q5-1 4 3t-4 2M0 7h3M13 15l3-3" fill="none" stroke="#ecdccb" stroke-width="1.300"/></svg>',
            folder: '<svg class="size-4 pt-[2px]"><use href="#folder"/></svg>'
        };
        document.getElementById('swatches').innerHTML = rows.map(function (row, i) {
            var cls = i < 3 ? 'h-[18px] grid grid-cols-16 items-center' : 'h-5 grid grid-cols-16 items-center';
            return '<div class="' + cls + '">' + row.map(function (c) {
                return special[c] || '<i class="block size-4" style="background:' + c + '"></i>';
            }).join('') + '</div>';
        }).join('');

        // filled bars first, guide lines second
        function bars(id, icons) {
            document.getElementById(id).innerHTML = icons.map(function (a) {
                return a ? '<button aria-label="' + a[0] + '"><svg class="size-[22px]" viewBox="0 0 22 22"><path d="' + a[1] + '" fill="currentColor"/><path d="' + a[2] + '" stroke="currentColor"/></svg></button>' : '<span></span>';
            }).join('');
        }
        bars('align', [
            ['水平左对齐', 'M3 2h10v8H3zM3 12h17v7H3z', 'M1.500 0v22'],
            ['水平居中对齐', 'M6 2h10v8H6zM3 12h16v7H3z', 'M11 0v22'],
            ['水平右对齐', 'M8 2h10v8H8zM2 12h16v7H2z', 'M20.500 0v22'],
            null,
            ['垂直顶对齐', 'M3 4h7v16H3zM12 4h8v10h-8z', 'M0 1.500h22'],
            ['垂直居中对齐', 'M3 2h7v16H3zM12 5h8v11h-8z', 'M0 10.500h22'],
            ['垂直底对齐', 'M3 2h7v16H3zM12 9h8v9h-8z', 'M0 20.500h22']
        ]);
        bars('distribute', [
            ['垂直顶分布', 'M6 3h10v6H6zM3 14h16v7H3z', 'M0 1.500h22M0 12.500h22'],
            ['垂直居中分布', 'M6 2h10v7H6zM3 13h16v7H3z', 'M0 5.500h22M0 16.500h22'],
            ['垂直底分布', 'M6 1h10v5H6zM3 12h16v7H3z', 'M0 8h22M0 20.500h22'],
            null,
            ['水平左分布', 'M4 3h6v16H4zM16 6h5v10h-5z', 'M1.500 0v22M13.500 0v22'],
            ['水平居中分布', 'M2 3h7v16H2zM13 6h7v10h-7z', 'M5.500 0v22M16.500 0v22'],
            ['水平右分布', 'M1 3h7v16H1zM13 6h5v10h-5z', 'M9.500 0v22M20.500 0v22']
        ]);
    </script>
</body>
</html>
